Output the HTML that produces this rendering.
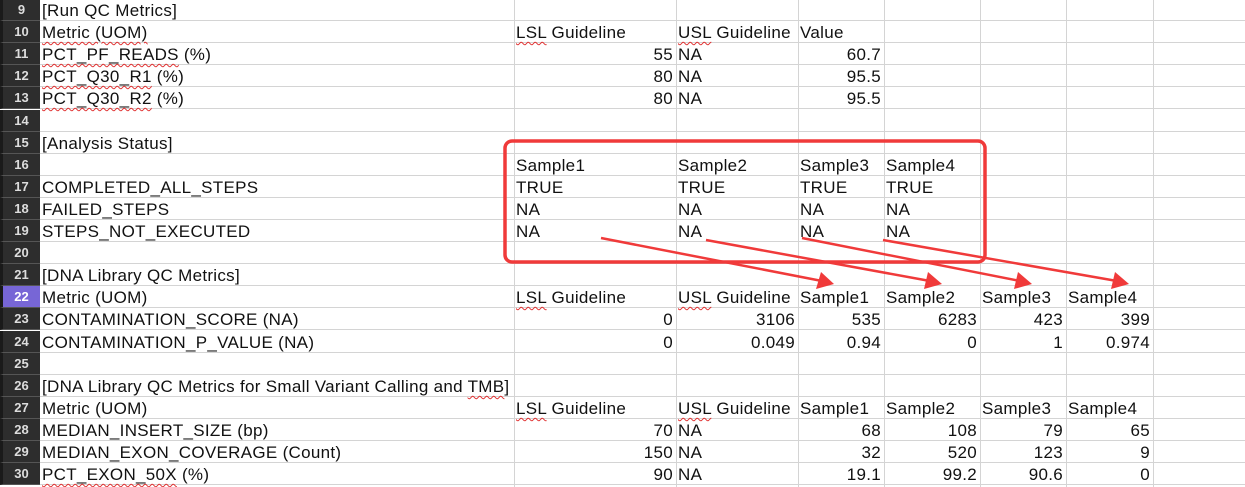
<!DOCTYPE html>
<html><head><meta charset="utf-8"><style>
body{margin:0;width:1245px;height:487px;overflow:hidden;background:#fff;font-family:"Liberation Sans",Arial,sans-serif;position:relative}
.rh{position:absolute;left:0;width:40px;background:#2d2d2d;color:#ddd;font-size:13px;font-weight:bold;text-align:center;border-bottom:1px solid #555;box-sizing:border-box;line-height:21px;border-left:3px solid #1a1a1a}
.rh.sel{background:#7766d6;color:#fff}
.hl{position:absolute;left:40px;right:0;height:1px;background:#d4d4d4}
.vl{position:absolute;top:0;height:487px;width:1px;background:#d4d4d4}
.c{position:absolute;font-size:17px;letter-spacing:0.3px;line-height:22px;color:#111;white-space:nowrap}
.r{text-align:right}
.sq{text-decoration:underline wavy #e03030;text-decoration-thickness:1px;text-underline-offset:3px}
</style></head><body>
<div id="g"></div>
<svg style="position:absolute;left:0;top:0" width="1245" height="487">
<rect x="505" y="141" width="480" height="121" rx="7" fill="none" stroke="#f03a3a" stroke-width="3.5"/>
<g stroke="#f03a3a" stroke-width="2.5" fill="#f03a3a">
<line x1="601" y1="238" x2="822" y2="281"/><polygon points="834,284 816,289 821,272" stroke="none"/>
<line x1="706" y1="240" x2="930" y2="281"/><polygon points="942,284 924,289 928,272" stroke="none"/>
<line x1="802" y1="238" x2="1020" y2="281"/><polygon points="1032,284 1014,289 1018,272" stroke="none"/>
<line x1="883" y1="240" x2="1117" y2="281"/><polygon points="1129,284 1111,289 1115,272" stroke="none"/>
</g></svg>
<script>
var rows={
9:[["[Run QC Metrics]"]],
10:[["<span class=sq>Metric (UOM)</span>"],["<span class=sq>LSL</span> Guideline",1],["<span class=sq>USL</span> Guideline",2],["Value",3]],
11:[["<span class=sq>PCT_PF_READS</span> (%)"],["55",1,1],["NA",2],["60.7",3,1]],
12:[["<span class=sq>PCT_Q30_R1</span> (%)"],["80",1,1],["NA",2],["95.5",3,1]],
13:[["<span class=sq>PCT_Q30_R2</span> (%)"],["80",1,1],["NA",2],["95.5",3,1]],
15:[["[Analysis Status]"]],
16:[["Sample1",1],["Sample2",2],["Sample3",3],["Sample4",4]],
17:[["COMPLETED_ALL_STEPS"],["TRUE",1],["TRUE",2],["TRUE",3],["TRUE",4]],
18:[["FAILED_STEPS"],["NA",1],["NA",2],["NA",3],["NA",4]],
19:[["STEPS_NOT_EXECUTED"],["NA",1],["NA",2],["NA",3],["NA",4]],
21:[["[DNA Library QC Metrics]"]],
22:[["Metric (UOM)"],["<span class=sq>LSL</span> Guideline",1],["<span class=sq>USL</span> Guideline",2],["Sample1",3],["Sample2",4],["Sample3",5],["Sample4",6]],
23:[["CONTAMINATION_SCORE (NA)"],["0",1,1],["3106",2,1],["535",3,1],["6283",4,1],["423",5,1],["399",6,1]],
24:[["CONTAMINATION_P_VALUE (NA)"],["0",1,1],["0.049",2,1],["0.94",3,1],["0",4,1],["1",5,1],["0.974",6,1]],
26:[["[DNA Library QC Metrics for Small Variant Calling and <span class=sq>TMB</span>]"]],
27:[["Metric (UOM)"],["<span class=sq>LSL</span> Guideline",1],["<span class=sq>USL</span> Guideline",2],["Sample1",3],["Sample2",4],["Sample3",5],["Sample4",6]],
28:[["MEDIAN_INSERT_SIZE (bp)"],["70",1,1],["NA",2],["68",3,1],["108",4,1],["79",5,1],["65",6,1]],
29:[["MEDIAN_EXON_COVERAGE (Count)"],["150",1,1],["NA",2],["32",3,1],["520",4,1],["123",5,1],["9",6,1]],
30:[["<span class=sq>PCT_EXON_50X</span> (%)"],["90",1,1],["NA",2],["19.1",3,1],["99.2",4,1],["90.6",5,1],["0",6,1]]
};
var cx=[40,514,676,798,884,980,1066,1153,1245];
var h="";
for(var i=1;i<cx.length-1;i++)h+='<div class=vl style="left:'+cx[i]+'px"></div>';
for(var n=9;n<=30;n++){
 var t=Math.round(-1+(n-9)*22.1);
 h+='<div class="rh'+(n==22?' sel':'')+'" style="top:'+t+'px;height:22px">'+n+'</div>';
 h+='<div class=hl style="top:'+(t+21)+'px"></div>';
 (rows[n]||[]).forEach(function(c){
  var col=c[1]||0,l=cx[col],w=cx[col+1]-l,tt=t+1;
  if(c[2]) h+='<div class="c r" style="top:'+tt+'px;left:'+l+'px;width:'+(w-3)+'px">'+c[0]+'</div>';
  else h+='<div class=c style="top:'+tt+'px;left:'+(l+2)+'px">'+c[0]+'</div>';
 });
}
document.getElementById('g').innerHTML=h;
</script>
</body></html>
